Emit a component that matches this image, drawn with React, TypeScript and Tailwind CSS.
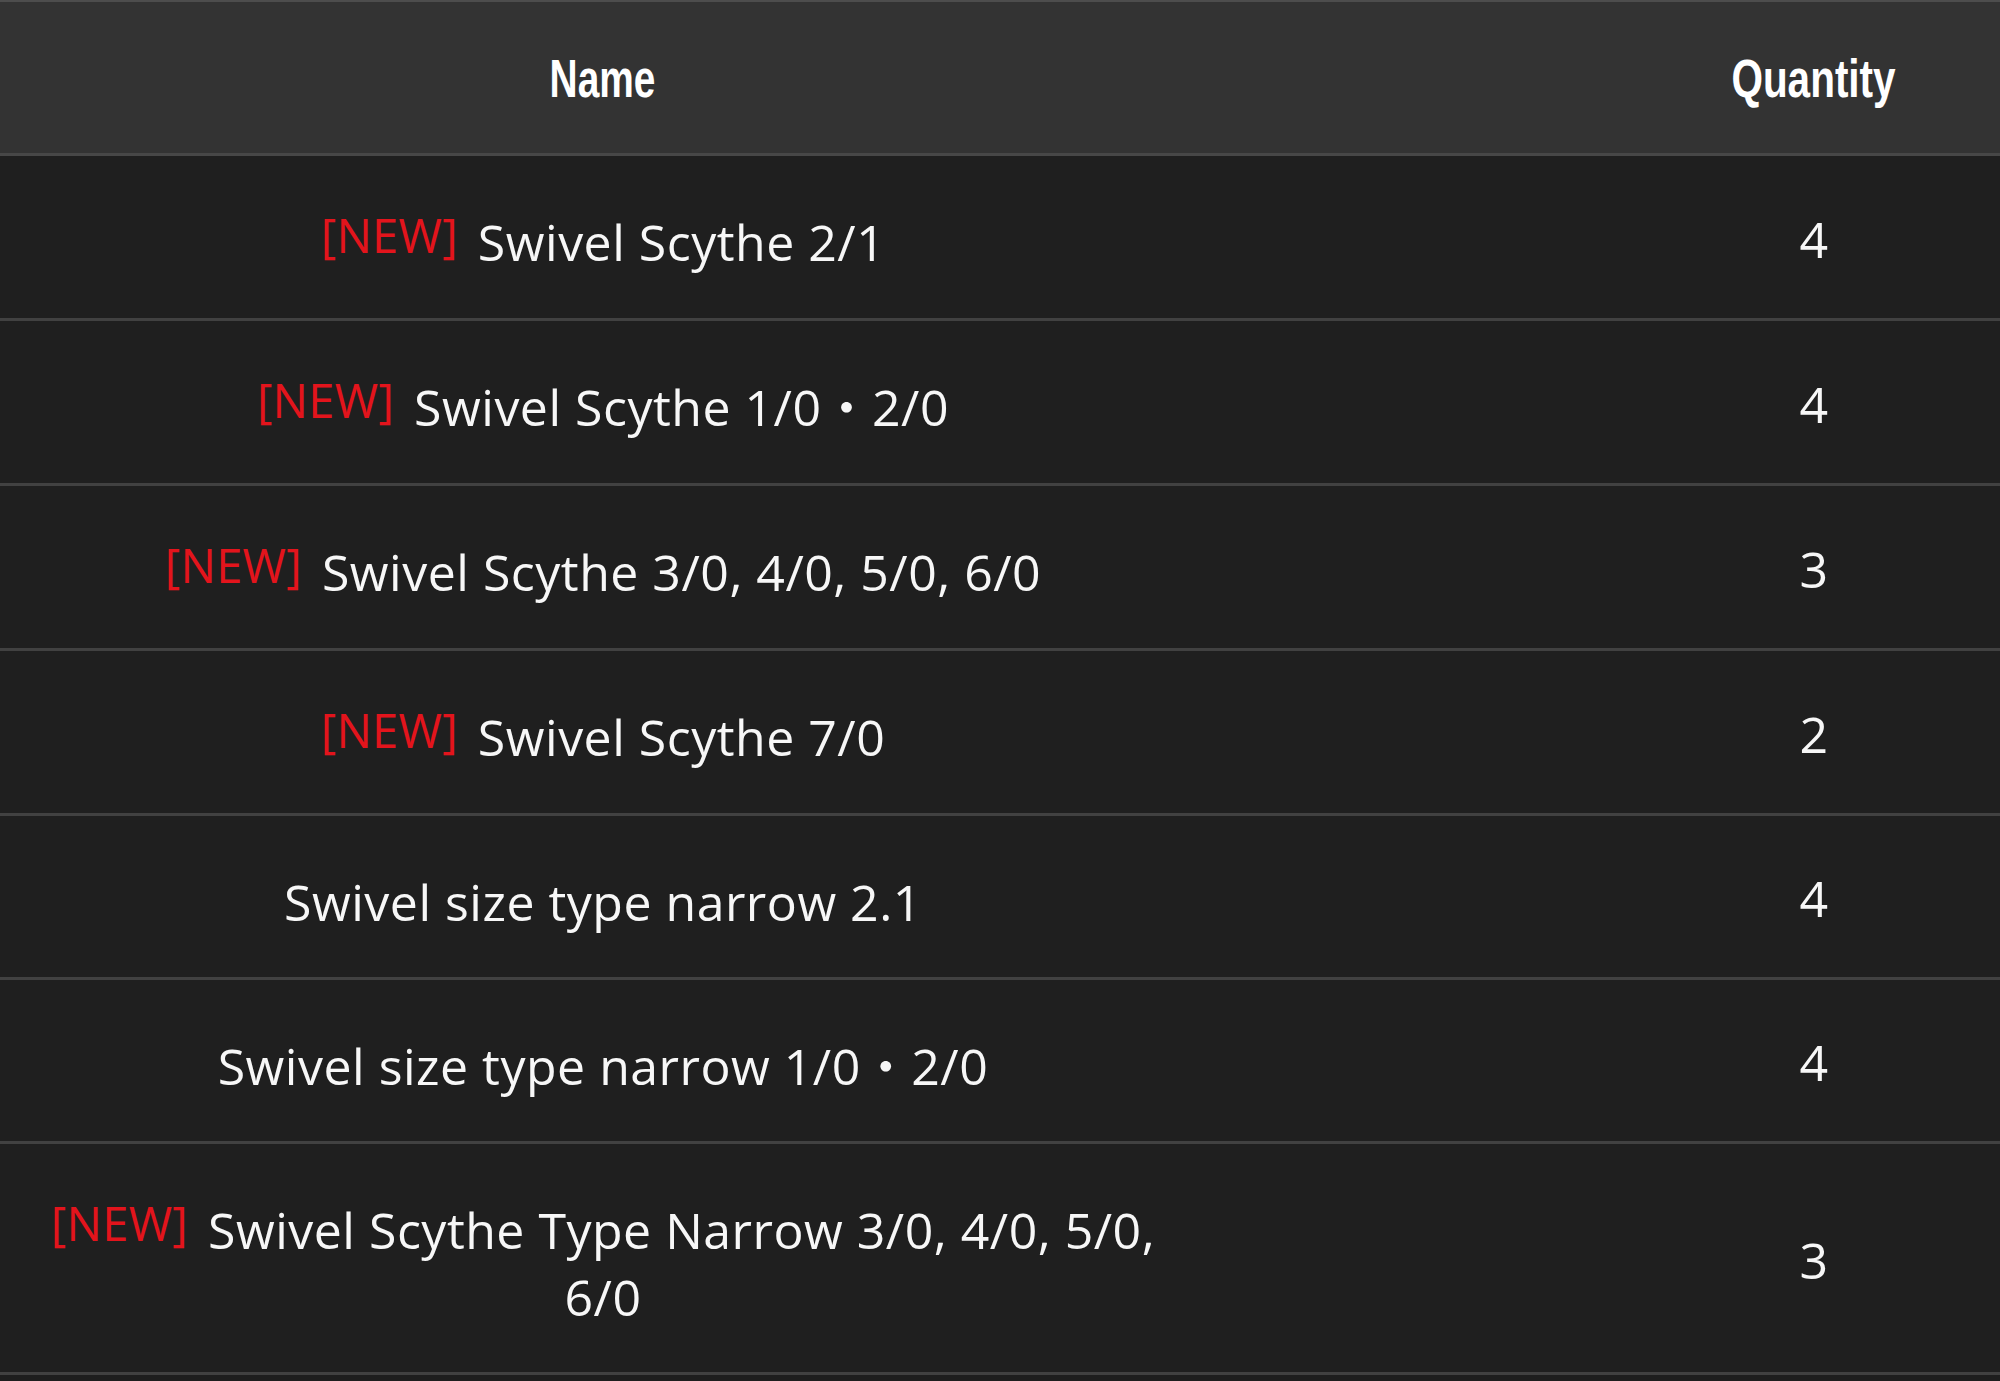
import React from "react";

const rows: { isNew: boolean; name: string; qty: string }[] = [
  { isNew: true, name: "Swivel Scythe 2/1", qty: "4" },
  { isNew: true, name: "Swivel Scythe 1/0・2/0", qty: "4" },
  { isNew: true, name: "Swivel Scythe 3/0, 4/0, 5/0, 6/0", qty: "3" },
  { isNew: true, name: "Swivel Scythe 7/0", qty: "2" },
  { isNew: false, name: "Swivel size type narrow 2.1", qty: "4" },
  { isNew: false, name: "Swivel size type narrow 1/0・2/0", qty: "4" },
  { isNew: true, name: "Swivel Scythe Type Narrow 3/0, 4/0, 5/0, 6/0", qty: "3" },
];

const bodyFont = { fontFamily: '"Open Sans", "Noto Sans", "Noto Sans CJK JP", sans-serif' };
const headFont = { fontFamily: '"Liberation Sans", Arial, sans-serif' };

export default function App() {
  return (
    <div className="w-[2000px] h-[1381px] bg-[#1e1e1e] overflow-hidden">
      <div className="border-t-2 border-[#4d4d4d]">
        <div
          className="flex items-center h-[154px] bg-[#333333] border-b-[3px] border-[#474747] text-white font-bold text-[54px] leading-none"
          style={headFont}
        >
          <div className="w-[1206px] flex justify-center">
            <span className="inline-block scale-x-[0.72]">Name</span>
          </div>
          <div className="flex-1" />
          <div className="w-[372px] flex justify-center">
            <span className="inline-block scale-x-[0.75]">Quantity</span>
          </div>
        </div>
        {rows.map((r, i) => (
          <div
            key={i}
            className="flex items-center bg-[#1f1f1f] border-b-[3px] border-[#414141] text-[#f7f7f7] text-[50px] leading-[66px] tracking-[0.5px] pt-[53px] pb-[42px]"
            style={bodyFont}
          >
            <div className="w-[1206px] flex justify-center">
              <div className="max-w-[1130px] text-center">
                {r.isNew && (
                  <span className="text-[#e3141c] text-[47px] tracking-[0.3px] relative -top-[8px] mr-[20px]">[NEW]</span>
                )}
                {r.name}
              </div>
            </div>
            <div className="flex-1" />
            <div className="w-[372px] text-center -translate-y-[4px]">{r.qty}</div>
          </div>
        ))}
      </div>
    </div>
  );
}
